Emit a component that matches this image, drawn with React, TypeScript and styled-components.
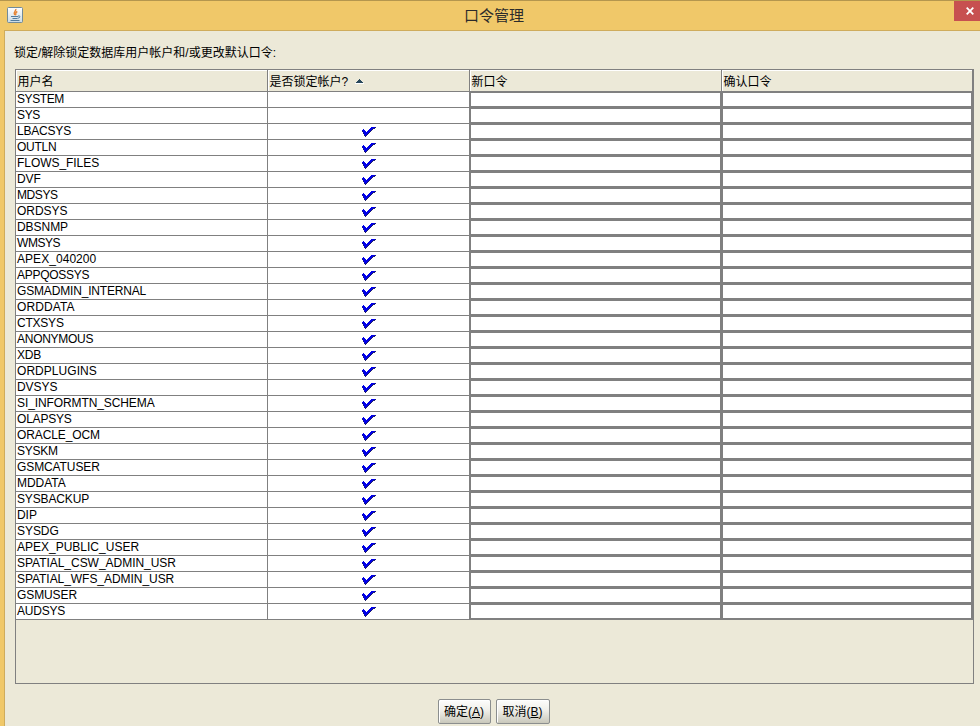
import React from "react";
import styled, { createGlobalStyle } from "styled-components";

const Global = createGlobalStyle`
  * { box-sizing: border-box; }
  body { margin: 0; overflow: hidden; background: #f0c869; }
`;

const Window = styled.div`
  width: 980px;
  height: 726px;
  display: flex;
  flex-direction: column;
  background: #f0c869;
  border-top: 1px solid #b4964e;
  color: #000;
  font: 12px/15px "Liberation Sans", "Noto Sans CJK SC", sans-serif;
`;

const TitleBar = styled.header`
  height: 29px;
  flex: none;
  display: grid;
  grid-template-columns: 100px 1fr 100px;
  align-items: start;
`;

const AppIcon = styled.svg`
  margin: 6px 0 0 7px;
  width: 16px;
  height: 16px;
`;

const Title = styled.h1`
  margin: 4px 0 0 8px;
  font: 400 15px/22px "Liberation Sans", "Noto Sans CJK SC", sans-serif;
  color: #2b2b2b;
  text-align: center;
`;

const CloseButton = styled.button`
  justify-self: end;
  width: 26px;
  height: 20px;
  padding: 0 0 0 6px;
  border: 0;
  background: #c75050;
  display: flex;
  align-items: center;
  justify-content: center;
`;

const Content = styled.main`
  flex: 1;
  margin-left: 4px;
  padding: 14px 6px 0 10px;
  border-top: 1px solid #cfac5c;
  border-left: 1px solid #cfac5c;
  background: #ece9d8;
  display: flex;
  flex-direction: column;
`;

const Prompt = styled.p`
  margin: 0 0 9px -1px;
  height: 15px;
  line-height: 16px;
  white-space: nowrap;
`;

const TableFrame = styled.section`
  width: 959px;
  height: 615px;
  flex: none;
  border: 1px solid #808080;
`;

const columns = "252px 202px 252px 251px";

const HeaderRow = styled.div`
  display: grid;
  grid-template-columns: ${columns};
  height: 22px;
`;

const HeaderCell = styled.div`
  display: flex;
  align-items: center;
  gap: 6.5px;
  padding: 3px 0 0 1.5px;
  border: solid #808080;
  border-width: 0 1px 1px 0;
  box-shadow: inset 1px 1px #fff;
  white-space: nowrap;
`;

const SortArrow = styled.svg`
  width: 9px;
  height: 5px;
  margin: 0 0 1px 0;
`;

const Row = styled.div`
  display: grid;
  grid-template-columns: ${columns};
  height: 16px;
  background: #fff;
`;

const Cell = styled.div<{ $center?: boolean; $tracking?: number }>`
  display: flex;
  justify-content: ${(p) => (p.$center ? "center" : "flex-start")};
  padding-left: ${(p) => (p.$center ? 0 : 1)}px;
  border: solid #808080;
  border-width: 0 1px 1px 0;
  line-height: 14px;
  letter-spacing: ${(p) => p.$tracking ?? 0}px;
  white-space: nowrap;
`;

const PasswordField = styled.div`
  border: solid #808080;
  border-width: 1px 2px 2px 1px;
`;

const Actions = styled.footer`
  display: flex;
  justify-content: center;
  gap: 5px;
  padding: 15px 2px 0 0;
`;

const Button = styled.button<{ $width: number }>`
  width: ${(p) => p.$width}px;
  height: 25px;
  padding: 0;
  border: 1px solid #8b8e8e;
  border-radius: 2px;
  background: linear-gradient(#fdfdfc, #f0efe9 45%, #c9c8bb);
  box-shadow: inset 1px 1px #fff;
  color: #000;
  font: 12px/20px "Liberation Sans", "Noto Sans CJK SC", sans-serif;
  white-space: nowrap;
`;

const Tick = styled.svg`
  display: block;
  width: 14px;
  height: 10px;
  margin-top: 3px;
`;

const CheckMark = () => (
  <Tick viewBox="0 0 14 10" shapeRendering="crispEdges">
    <path
      d="M9 0h5v1h-5zM8 1h5v1h-5zM1 2h1v1h-1zM7 2h4v1h-4zM0 3h3v1h-3zM6 3h4v1h-4zM0 4h4v1h-4zM5 4h4v1h-4zM1 5h7v1h-7zM1 6h6v1h-6zM2 7h4v1h-4zM2 8h3v1h-3zM3 9h1v1h-1z"
      fill="#0000e8"
    />
    <path
      d="M13 0h1v1h-1zM11 1h2v1h-2zM10 2h1v1h-1zM9 3h1v1h-1zM8 4h1v1h-1zM7 5h1v1h-1zM6 6h1v1h-1zM5 7h1v1h-1zM4 8h1v1h-1zM3 9h1v1h-1zM2 8h1v1h-1zM0 4h1v1h-1zM1 6h1v1h-1z"
      fill="#20206a"
    />
  </Tick>
);

const JavaIcon = () => (
  <AppIcon viewBox="0 0 16 16">
    <defs>
      <linearGradient id="tile" x1="0" y1="0" x2="0" y2="1">
        <stop stopColor="#fff" />
        <stop offset="1" stopColor="#cbdbe4" />
      </linearGradient>
    </defs>
    <rect x=".5" y=".5" width="15" height="15" rx="1" fill="url(#tile)" stroke="#718b99" />
    <path d="M8.8 2c.8 2-3.3 2.8-1.1 6M10.3 4.5C7 6 10 6.8 8.3 8.3" fill="none" stroke="#e68332" strokeWidth="1.4" />
    <path d="M4 9.5h7M5.5 11.5h5M3.5 13.5h9M11 9c2.8-.7 2.5 2-.3 2.2" fill="none" stroke="#527c9e" strokeWidth="1" />
  </AppIcon>
);

const users: [name: string, tracking: number][] = [
  ["SYSTEM", -0.4], ["SYS", -0.35], ["LBACSYS", -0.2], ["OUTLN", -0.25],
  ["FLOWS_FILES", -0.05], ["DVF", -0.05], ["MDSYS", -0.4], ["ORDSYS", -0.05],
  ["DBSNMP", -0.05], ["WMSYS", -0.45], ["APEX_040200", 0.05], ["APPQOSSYS", -0.27],
  ["GSMADMIN_INTERNAL", -0.17], ["ORDDATA", 0.1], ["CTXSYS", -0.22], ["ANONYMOUS", -0.27],
  ["XDB", -0.2], ["ORDPLUGINS", 0.05], ["DVSYS", -0.05], ["SI_INFORMTN_SCHEMA", -0.1],
  ["OLAPSYS", -0.2], ["ORACLE_OCM", -0.1], ["SYSKM", -0.25], ["GSMCATUSER", -0.1],
  ["MDDATA", -0.05], ["SYSBACKUP", -0.15], ["DIP", -0.05], ["SYSDG", -0.05],
  ["APEX_PUBLIC_USER", 0], ["SPATIAL_CSW_ADMIN_USR", -0.03], ["SPATIAL_WFS_ADMIN_USR", -0.05],
  ["GSMUSER", -0.1], ["AUDSYS", -0.2],
];

export default function App() {
  return (
    <Window>
      <Global />
      <TitleBar>
        <JavaIcon />
        <Title>口令管理</Title>
        <CloseButton aria-label="关闭">
          <svg width="8" height="8" viewBox="0 0 8 8">
            <path d="M.7 .7l6.6 6.6M7.3 .7L.7 7.3" stroke="#fff" strokeWidth="1.8" />
          </svg>
        </CloseButton>
      </TitleBar>
      <Content>
        <Prompt>锁定/解除锁定数据库用户帐户和/或更改默认口令:</Prompt>
        <TableFrame>
          <HeaderRow>
            <HeaderCell>用户名</HeaderCell>
            <HeaderCell>
              是否锁定帐户?
              <SortArrow viewBox="0 0 9 5" shapeRendering="crispEdges">
                <path d="M0 4h9v1H0z" fill="#fff" />
                <path d="M4 0h1v1h1v1h1v1h1v1h1v0H0V4h1V3h1V2h1V1h1z" fill="#28485c" />
              </SortArrow>
            </HeaderCell>
            <HeaderCell>新口令</HeaderCell>
            <HeaderCell>确认口令</HeaderCell>
          </HeaderRow>
          {users.map(([name, tracking], i) => (
            <Row key={name}>
              <Cell $tracking={tracking}>{name}</Cell>
              <Cell $center>{i > 1 && <CheckMark />}</Cell>
              <PasswordField />
              <PasswordField />
            </Row>
          ))}
        </TableFrame>
        <Actions>
          <Button $width={53}>确定(<u>A</u>)</Button>
          <Button $width={54}>取消(<u>B</u>)</Button>
        </Actions>
      </Content>
    </Window>
  );
}
